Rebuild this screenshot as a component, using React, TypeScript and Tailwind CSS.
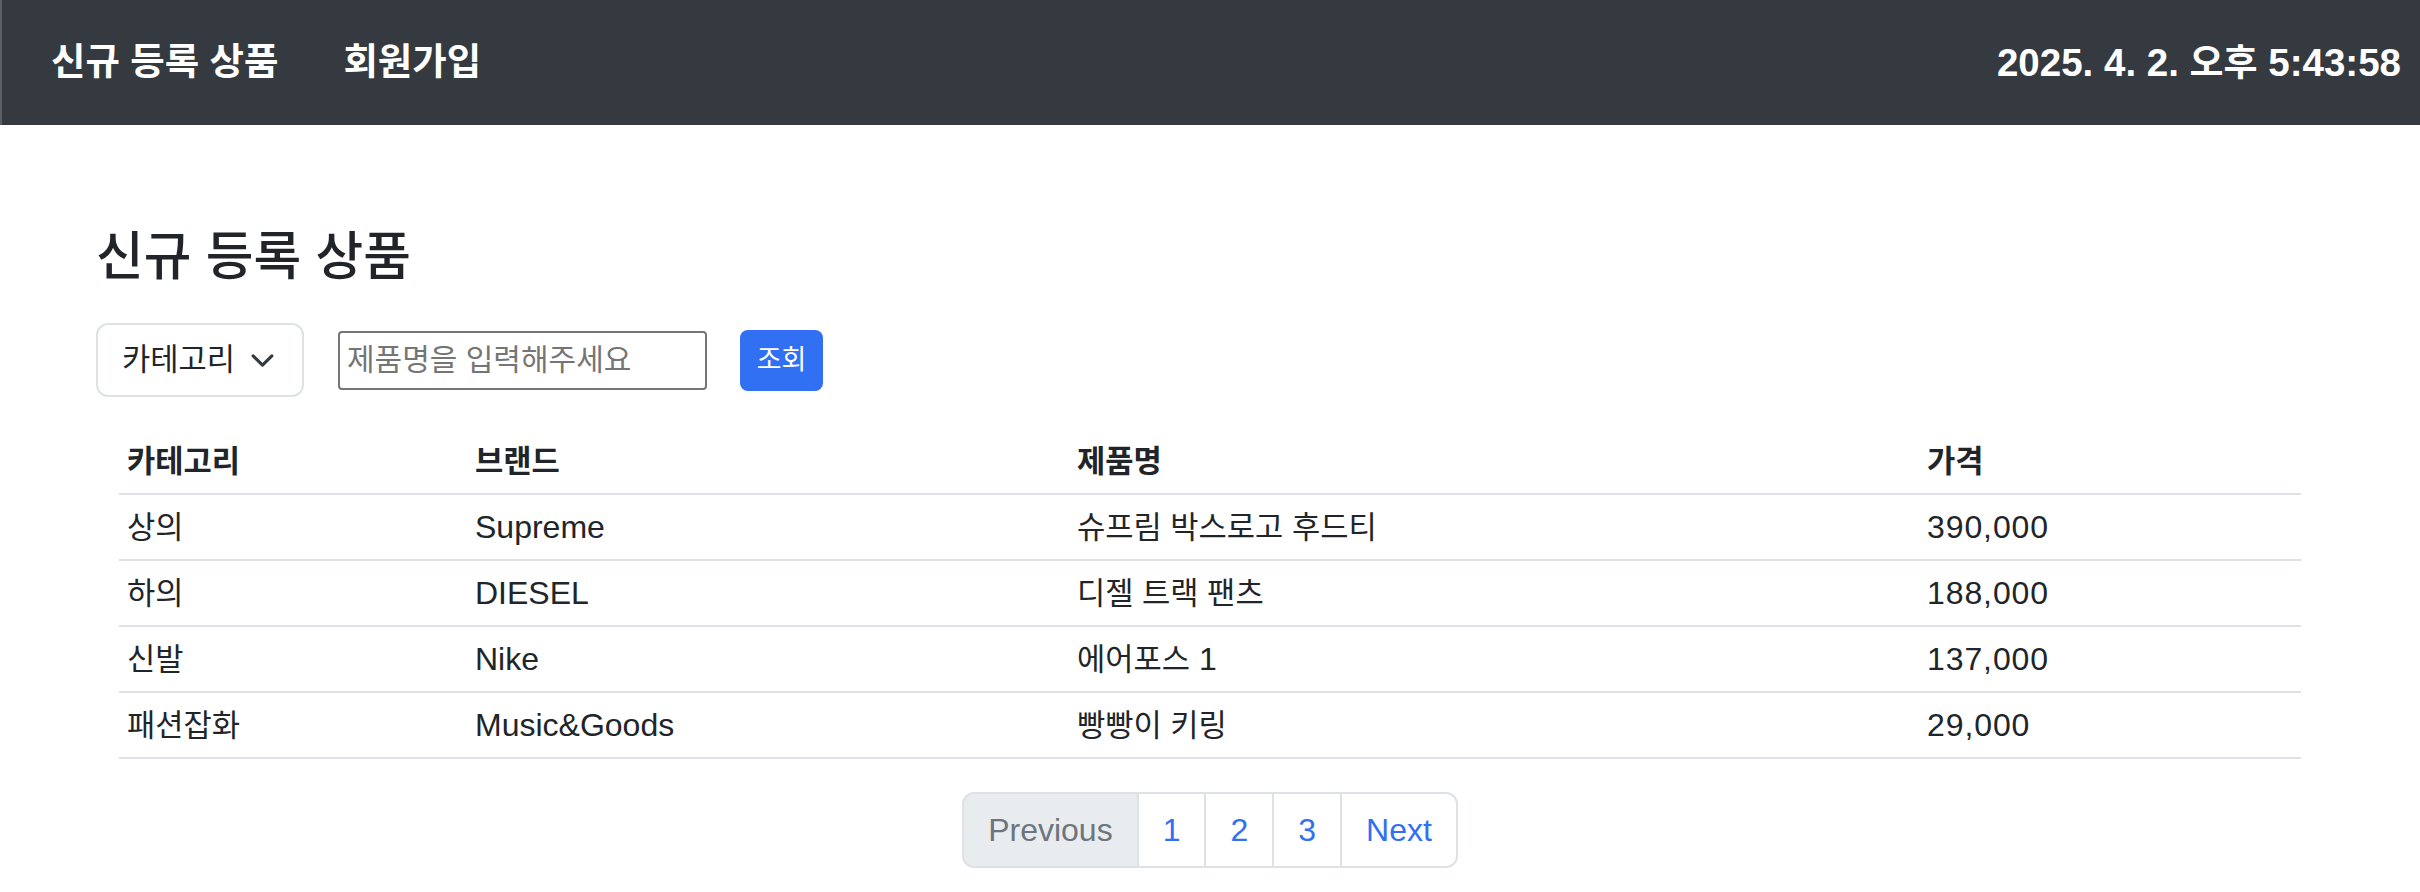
import React from "react";

const rows = [
  ["상의", "Supreme", "슈프림 박스로고 후드티", "390,000"],
  ["하의", "DIESEL", "디젤 트랙 팬츠", "188,000"],
  ["신발", "Nike", "에어포스 1", "137,000"],
  ["패션잡화", "Music&Goods", "빵빵이 키링", "29,000"],
];

const Mixed = ({ text }: { text: string }) => (
  <>
    {text.split(/([가-힣]+(?: [가-힣]+)*)/).map((part, i) =>
      /[가-힣]/.test(part) ? (
        <span key={i} className="text-[0.96em]">
          {part}
        </span>
      ) : (
        <React.Fragment key={i}>{part}</React.Fragment>
      )
    )}
  </>
);

const cols = "grid grid-cols-[348px_602px_850px_1fr] items-center";

const App = () => {
  return (
    <div className="min-h-screen bg-white text-[#212529] font-['Liberation_Sans','Noto_Sans_CJK_KR',sans-serif]">
      <nav className="h-[125px] bg-[#343a40] border-l-2 border-[#5a5f65] flex items-center pl-[49px] pr-[19px] text-white font-bold text-[39px]">
        <a className="mr-[65px]">
          <Mixed text="신규 등록 상품" />
        </a>
        <a>
          <Mixed text="회원가입" />
        </a>
        <div className="ml-auto text-[38.5px]">
          <Mixed text="2025. 4. 2. 오후 5:43:58" />
        </div>
      </nav>

      <main className="px-[96px] pt-[98px]">
        <h3 className="text-[54px] leading-[67px] font-medium">
          <Mixed text="신규 등록 상품" />
        </h3>

        <div className="mt-[32px] flex items-center">
          <div className="w-[208px] h-[74px] border-2 border-[#dee2e6] rounded-[12px] pl-[24px] pr-[27px] flex items-center justify-between text-[32px]">
            <Mixed text="카테고리" />
            <svg width="25" height="25" viewBox="0 0 16 16" fill="none">
              <path
                d="m2 5 6 6 6-6"
                stroke="#343a40"
                strokeWidth="2"
                strokeLinecap="round"
                strokeLinejoin="round"
              />
            </svg>
          </div>
          <input
            className="ml-[34px] w-[369px] h-[59px] border-2 border-[#767676] rounded-[4px] px-[7px] text-[30px] outline-none placeholder:text-[#757575]"
            placeholder="제품명을 입력해주세요"
          />
          <button className="ml-[33px] w-[83px] h-[61px] rounded-[8px] bg-[#316ff3] text-white text-[27px]">
            조회
          </button>
        </div>

        <div className="mt-[32px] mx-[23px] text-[32px]">
          <div className={`${cols} h-[66px] border-b-2 border-[#dee2e6] font-bold`}>
            {["카테고리", "브랜드", "제품명", "가격"].map((h) => (
              <div key={h} className="px-[8px]">
                <Mixed text={h} />
              </div>
            ))}
          </div>
          {rows.map((r) => (
            <div key={r[1]} className={`${cols} h-[66px] border-b-2 border-[#dee2e6]`}>
              {r.map((c, i) => (
                <div key={i} className={i === 3 ? "px-[8px] tracking-[0.9px]" : "px-[8px]"}>
                  <Mixed text={c} />
                </div>
              ))}
            </div>
          ))}
        </div>

        <div className="mt-[33px] flex justify-center">
          <ul className="flex text-[32px] leading-[48px]">
            <li className="px-[24px] py-[12px] border-2 border-[#dee2e6] rounded-l-[12px] bg-[#e9ecef] text-[#6c757d]">
              Previous
            </li>
            {["1", "2", "3"].map((p) => (
              <li key={p} className="-ml-[2px] px-[24px] py-[12px] border-2 border-[#dee2e6] text-[#316ff3]">
                {p}
              </li>
            ))}
            <li className="-ml-[2px] px-[24px] py-[12px] border-2 border-[#dee2e6] rounded-r-[12px] text-[#316ff3]">
              Next
            </li>
          </ul>
        </div>
      </main>
    </div>
  );
};

export default App;
